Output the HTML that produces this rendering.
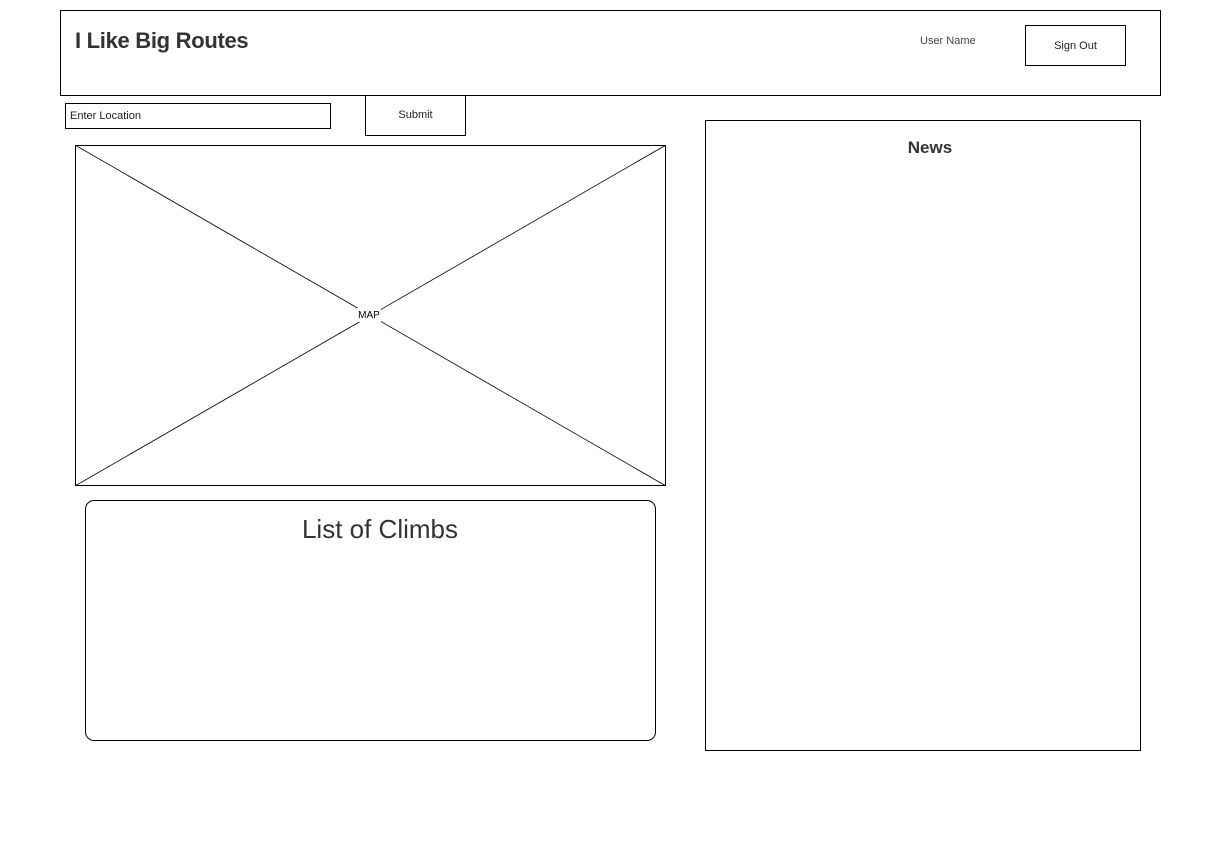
<!DOCTYPE html>
<html><head><style>
body{margin:0;width:1211px;height:861px;background:#fff;position:relative;font-family:"Liberation Sans",sans-serif;color:#333;overflow:hidden}
div{position:absolute;box-sizing:border-box}
</style></head><body>
<div style="left:60px;top:10px;width:1101px;height:86px;border:1px solid #000"></div>
<div style="left:75px;top:28px;font-size:22px;font-weight:bold;color:#333;letter-spacing:-0.3px">I Like Big Routes</div>
<div style="left:920px;top:35px;font-size:11px;color:#444">User Name</div>
<div style="left:1025px;top:25px;width:101px;height:41px;border:1px solid #000;font-size:11px;text-align:center;line-height:41px;color:#222">Sign Out</div>
<div style="left:65px;top:103px;width:266px;height:26px;border:1px solid #000;font-size:11px;line-height:25px;padding-left:4px;color:#222">Enter Location</div>
<div style="left:365px;top:95px;width:101px;height:41px;border:1px solid #000;border-top:none;font-size:11px;text-align:center;line-height:41px;color:#222">Submit</div>
<svg style="position:absolute;left:75px;top:145px" width="591" height="341"><rect x="0.5" y="0.5" width="590" height="340" fill="none" stroke="#000"/><line x1="0" y1="0" x2="591" y2="341" stroke="#000" stroke-width="0.8"/><line x1="591" y1="0" x2="0" y2="341" stroke="#000" stroke-width="0.8"/><rect x="282" y="163" width="24" height="14" fill="#fff"/><text x="294" y="173" font-size="10" text-anchor="middle" font-family="Liberation Sans" fill="#000">MAP</text></svg>
<div style="left:85px;top:500px;width:571px;height:241px;border:1px solid #000;border-radius:9px"></div>
<div style="left:85px;top:514px;width:590px;text-align:center;font-size:26px;color:#333">List of Climbs</div>
<div style="left:705px;top:120px;width:436px;height:631px;border:1px solid #000"></div>
<div style="left:705px;top:138px;width:450px;text-align:center;font-size:17px;font-weight:bold;color:#333">News</div>
</body></html>
